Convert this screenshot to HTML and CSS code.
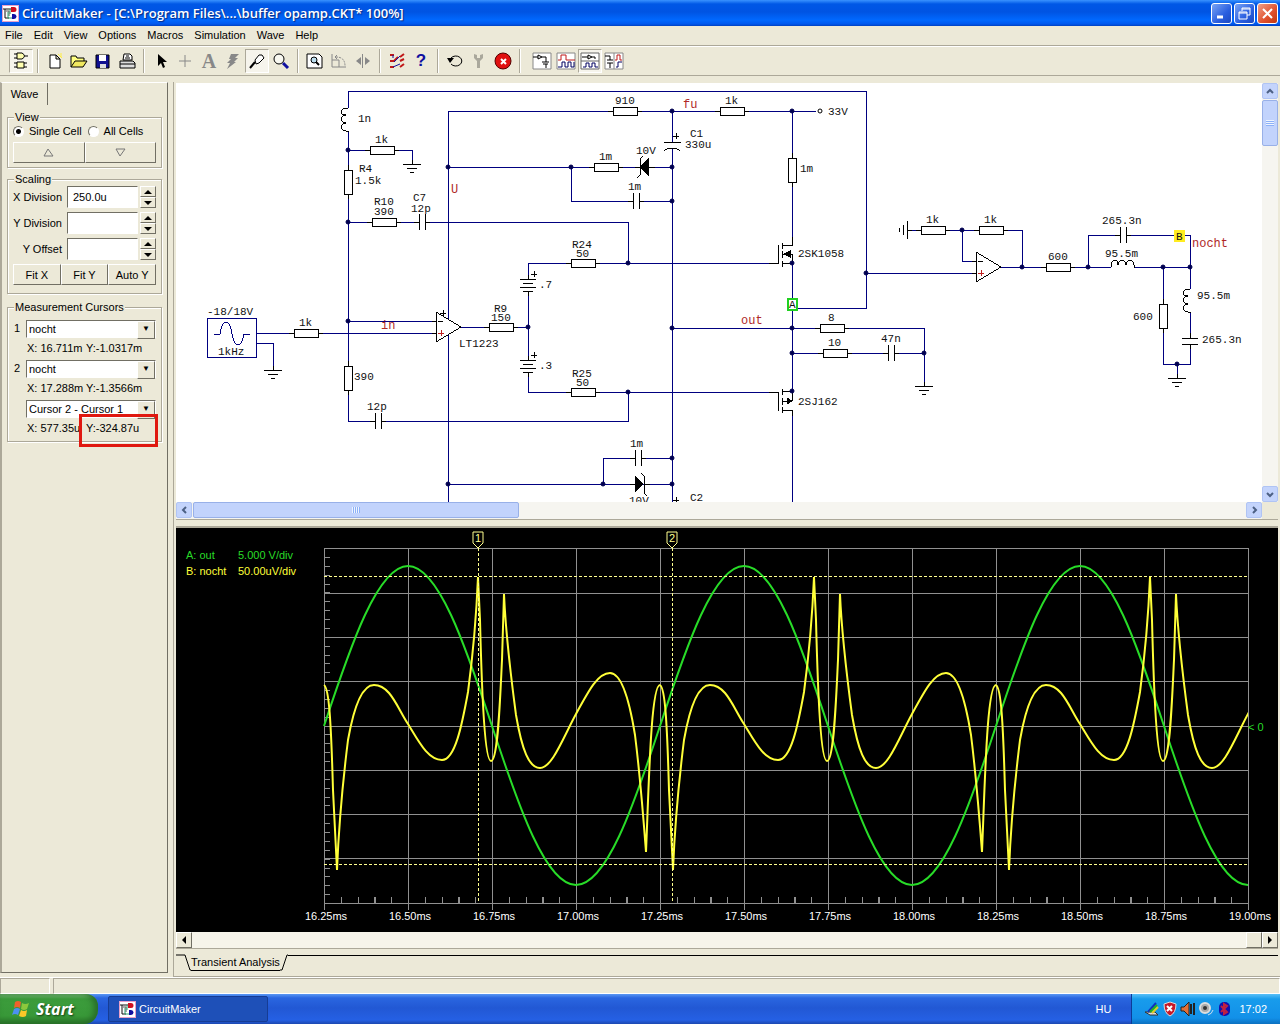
FILE: index.html
```html
<!DOCTYPE html>
<html lang="en">
<head>
  <meta charset="UTF-8">
  <title>CircuitMaker - buffer opamp.CKT</title>
  <meta name="viewport" content="width=device-width, initial-scale=1.0">
  <link rel="stylesheet" href="styles.css">
</head>
<body>
  <!-- shared drawings -->
  <svg class="defs" aria-hidden="true">
    <defs>
      <g id="logo">
        <rect width="17" height="17" fill="#e8a0c8"/>
        <rect x="1" y="1" width="15" height="15" fill="#fff"/>
        <path d="M1 4h9M3 4v9h4" fill="none" stroke="#111"/>
        <path d="M4 6h3v5" fill="none" stroke="#555"/>
        <path d="M6 7v6h5M8 4v5" stroke="#30a070" fill="none"/>
        <path d="M9 2h3a2 2 0 0 1 0 5H9z" fill="#d01020"/>
        <path d="M10 9h2a2 2 0 0 1 0 5h-2z" fill="#1010a0"/>
      </g>
      <g id="res-h"><rect x="0" y="-4" width="24" height="8" fill="#fff"/><path d="M-5 0H0M24 0h5"/></g>
      <g id="res-v"><rect x="-4" y="0" width="8" height="24" fill="#fff"/><path d="M0 -5V0M0 24v5"/></g>
      <g id="cap-h"><path d="M-5 0H0M0 -8V8M6 -8V8M6 0h5"/></g>
      <g id="cap-v"><path d="M0 -5V0M-8 0H8M-8 6H8M0 6v5"/></g>
      <g id="coil-v"><path d="M0 0q-7 0 -7 4q0 3 5 3q-5 1 -5 4t5 4q-5 1 -5 4t5 4h2v1"/></g>
      <g id="coil-h"><path d="M0 0q0 -7 4 -7q3 0 3 5q1 -5 4 -5t4 5q1 -5 4 -5t4 5v2h1"/></g>
      <g id="gnd"><path d="M0 -4V0M-9 0H9M-5 4H5M-2 8H2"/></g>
      <g id="battery"><path d="M0 -4V0M-8 0H8M-5 4H5M-8 8H8M-5 12H5M0 12v5M3 -5h6M6 -8v6"/></g>
      <g id="opamp"><path d="M0 -15V15L25 0zM-4 -6H0M-4 6H0M2 -6h5" fill="#fff"/><path class="red" d="M2 6h6M5 3v6"/></g>
      <path id="spin-up" d="M0 4h8L4 0z"/>
      <path id="spin-down" d="M0 0h8L4 4z"/>
    </defs>
  </svg>

  <header class="titlebar">
    <svg width="17" height="17"><use href="#logo"/></svg>
    <h1>CircuitMaker - [C:\Program Files\...\buffer opamp.CKT* 100%]</h1>
    <div class="win-buttons">
      <button type="button" aria-label="Minimize"><svg width="13" height="13"><path d="M2 10h6" stroke="#fff" stroke-width="3"/></svg></button>
      <button type="button" aria-label="Restore"><svg width="13" height="13" fill="none" stroke="#fff"><path d="M4 4V1h8v7H9M4 2h8"/><path d="M1 5h8v7H1zM1 6h8"/></svg></button>
      <button type="button" class="close" aria-label="Close"><svg width="13" height="13"><path d="M2 2l9 9M11 2l-9 9" stroke="#fff" stroke-width="2"/></svg></button>
    </div>
  </header>

  <nav class="menubar">
    <a href="#">File</a>
    <a href="#">Edit</a>
    <a href="#">View</a>
    <a href="#">Options</a>
    <a href="#">Macros</a>
    <a href="#">Simulation</a>
    <a href="#">Wave</a>
    <a href="#">Help</a>
  </nav>

  <div class="toolbar">
    <button type="button" class="on" aria-label="Parts"><svg width="18" height="18" fill="#ffffb0" stroke="#000"><path d="M5 1h5q5 3 0 6H5zM2 2h3M2 6h3M13 4h3M5 10h7v6H5zM2 11h3M2 15h3M12 11h3M12 15h3"/></svg></button>
    <span class="sep"></span>
    <button type="button" aria-label="New"><svg width="18" height="18"><path d="M12 2l4 4M15 1v4" stroke="#ffee40"/><path d="M4 3h6l4 4v9H4zM10 3v4h4" fill="#fff" stroke="#000"/></svg></button>
    <button type="button" aria-label="Open"><svg width="18" height="18"><path d="M1 15V4h5l1 2h7v3" fill="#ffff80" stroke="#000"/><path d="M1 15l4-6h12l-4 6z" fill="#f0e860" stroke="#000"/></svg></button>
    <button type="button" aria-label="Save"><svg width="18" height="18"><path d="M2 3h13v13H2z" fill="#101090" stroke="#000"/><path d="M5 3h7v6H5z" fill="#fff"/><path d="M6 12h6v4H6z" fill="#ddd"/></svg></button>
    <button type="button" aria-label="Print"><svg width="18" height="18" stroke="#000"><path d="M5 8l1-6h6l2 2v4z" fill="#fff"/><path d="M8 4h3M7 6h5"/><path d="M2 9h13l2 2v5H2zM2 12h15" fill="#ddd"/></svg></button>
    <span class="sep"></span>
    <button type="button" aria-label="Select"><svg width="18" height="18"><path d="M6 2v12l3-3 2 5 2-1-2-5h4z"/></svg></button>
    <button type="button" aria-label="Wire"><svg width="18" height="18"><path d="M3 9h12M9 3v12" stroke="#888"/></svg></button>
    <button type="button" class="letter" aria-label="Text">A</button>
    <button type="button" aria-label="Delete"><svg width="18" height="18"><path d="M7 2h8l-4 4h3l-4 4h2L3 17l3-6H3l4-4H5z" fill="#888"/></svg></button>
    <button type="button" class="on" aria-label="Probe"><svg width="18" height="18"><path d="M2 16l5-6" stroke="#000" stroke-width="2"/><path d="M7 8l4-5h3l2 3-5 5-3 1z" fill="#fff" stroke="#000"/></svg></button>
    <button type="button" aria-label="Zoom"><svg width="18" height="18"><circle cx="7" cy="7" r="5" fill="#f8f8f0" stroke="#000"/><path d="M11 11l5 5" stroke="#1010a0" stroke-width="3"/></svg></button>
    <span class="sep"></span>
    <button type="button" aria-label="Fit"><svg width="18" height="18"><path d="M1 2h12l3 3v11H1z" fill="#fff" stroke="#000"/><circle cx="8" cy="8" r="3" fill="#bde" stroke="#000"/><path d="M10 10l3 3" stroke="#000" stroke-width="2"/></svg></button>
    <button type="button" aria-label="Rotate"><svg width="18" height="18" fill="none" stroke="#888"><path d="M2 2v13h14M2 8h7v7M7 3l-2 2 2 2"/><path d="M6 5q9 0 9 9" stroke-dasharray="2 1"/></svg></button>
    <button type="button" aria-label="Mirror"><svg width="18" height="18" fill="#888"><path d="M7 5v8L2 9zM11 5v8l5-4zM8 2h1v14H8z"/></svg></button>
    <span class="sep"></span>
    <button type="button" aria-label="Digital"><svg width="18" height="18" fill="none"><path d="M2 3h4M2 9h4l4-4M2 15h4M12 5l4-3M12 9l4-2M12 15l4-3" stroke="#c01818" stroke-width="2"/><path d="M5 3v3M5 15l7-3M6 10l6-6" stroke="#1010a0"/></svg></button>
    <button type="button" class="help" aria-label="Help">?</button>
    <span class="sep"></span>
    <button type="button" aria-label="Reset"><svg width="18" height="18"><path d="M5 6a6 5 0 1 1 0 6" fill="none" stroke="#000"/><path d="M1 6h7l-4 5z"/></svg></button>
    <button type="button" aria-label="Step"><svg width="18" height="18"><path d="M4 2v4l3 3v7h3V9l3-3V2l-3 1v3H7V3z" fill="#aaa89c"/></svg></button>
    <button type="button" aria-label="Stop"><svg width="18" height="18"><circle cx="9" cy="9" r="8" fill="#e01010" stroke="#500"/><path d="M7 7l5 5M12 7l-5 5" stroke="#fff" stroke-width="2"/></svg></button>
    <span class="sep wide"></span>
    <button type="button" aria-label="Schematic view"><svg width="20" height="18" fill="none" stroke="#000"><path d="M1 1h18v16H1z" fill="#fff" stroke="#888"/><path d="M1 5h5M6 3v4l4-2zM10 5h4v5M10 10h7M11 12h5M14 12v4"/></svg></button>
    <button type="button" aria-label="Wave view"><svg width="20" height="18" fill="none"><path d="M1 1h18v16H1z" fill="#fff" stroke="#888"/><path d="M2 8h3V3h5v5h9" stroke="#c01818"/><path d="M2 15h4v-5h3v5h3v-5h3v5h3v-5" stroke="#000060"/></svg></button>
    <button type="button" class="on" aria-label="Split horizontal"><svg width="20" height="18" fill="none" stroke="#000"><path d="M1 1h18v16H1zM1 9h18" fill="#fff" stroke="#666"/><path d="M2 5h6M8 3v4l4-2zM12 5h3v2"/><path d="M3 15h3v-4h3v4h3v-4h3v4h3" stroke="#000060"/></svg></button>
    <button type="button" aria-label="Split vertical"><svg width="20" height="18" fill="none"><path d="M1 1h18v16H1zM10 1v16" fill="#fff" stroke="#888"/><path d="M1 4h5v4M3 8h6M3 11h6M6 11v5" stroke="#000"/><path d="M11 8h2V3h3v5h2" stroke="#c01818"/><path d="M12 15h2v-5h4" stroke="#000060"/></svg></button>
  </div>

  <main class="work">
    <aside class="side">
      <div class="tabs"><button type="button" class="tab">Wave</button></div>

      <fieldset class="view">
        <legend>View</legend>
        <div class="radios">
          <label><input type="radio" name="cells" checked>Single Cell</label>
          <label><input type="radio" name="cells">All Cells</label>
        </div>
        <div class="button-row">
          <button type="button" aria-label="Previous cell"><svg width="11" height="9" fill="none" stroke="#777"><path d="M1 8h9L5 1z"/></svg></button>
          <button type="button" aria-label="Next cell"><svg width="11" height="9" fill="none" stroke="#777"><path d="M1 1h9L5 8z"/></svg></button>
        </div>
      </fieldset>

      <fieldset class="scaling">
        <legend>Scaling</legend>
        <div class="field">
          <label for="xdiv">X Division</label>
          <input type="text" id="xdiv" value="250.0u">
          <div class="spin">
            <button type="button" aria-label="X up"><svg width="8" height="4"><use href="#spin-up"/></svg></button>
            <button type="button" aria-label="X down"><svg width="8" height="4"><use href="#spin-down"/></svg></button>
          </div>
        </div>
        <div class="field">
          <label for="ydiv">Y Division</label>
          <input type="text" id="ydiv">
          <div class="spin">
            <button type="button" aria-label="Y up"><svg width="8" height="4"><use href="#spin-up"/></svg></button>
            <button type="button" aria-label="Y down"><svg width="8" height="4"><use href="#spin-down"/></svg></button>
          </div>
        </div>
        <div class="field">
          <label for="yoff">Y Offset</label>
          <input type="text" id="yoff">
          <div class="spin">
            <button type="button" aria-label="Offset up"><svg width="8" height="4"><use href="#spin-up"/></svg></button>
            <button type="button" aria-label="Offset down"><svg width="8" height="4"><use href="#spin-down"/></svg></button>
          </div>
        </div>
        <div class="button-row">
          <button type="button">Fit X</button>
          <button type="button">Fit Y</button>
          <button type="button">Auto Y</button>
        </div>
      </fieldset>

      <fieldset class="cursors">
        <legend>Measurement Cursors</legend>
        <div class="cursor">
          <label for="cur1">1</label>
          <div class="combo"><select id="cur1"><option>nocht</option><option>out</option></select></div>
        </div>
        <p class="readout"><span>X: 16.711m</span><span>Y:-1.0317m</span></p>
        <div class="cursor">
          <label for="cur2">2</label>
          <div class="combo"><select id="cur2"><option>nocht</option><option>out</option></select></div>
        </div>
        <p class="readout"><span>X: 17.288m</span><span>Y:-1.3566m</span></p>
        <div class="cursor">
          <div class="combo"><select aria-label="Difference"><option>Cursor 2 - Cursor 1</option></select></div>
        </div>
        <p class="readout"><span>X: 577.35u</span><span>Y:-324.87u</span></p>
        <div class="highlight"></div>
      </fieldset>
    </aside>

    <section class="panes">
      <div class="schematic">
        <div class="canvas">
          <svg class="circuit" viewBox="176 83 1086 419" preserveAspectRatio="xMinYMin slice">
            <!-- wires -->
            <g class="wire">
              <path d="M348 108V91H866V308H792M348 132V421H375M348 150H370M395 150H412V164"/>
              <path d="M448 319V111H613M637 111H816M448 335V502M448 167H640M649 167H672M571 167V201H633M639 201H672"/>
              <path d="M348 222H419M425 222H628V263M528 280V263H778M528 291V360M528 372V392H778M381 421H628V392"/>
              <path d="M672 111V142M672 149V502M792 111V245M792 263V391M792 410V502"/>
              <path d="M348 321H436M257 333H436M257 343H273V370M461 327H528"/>
              <path d="M672 328H924V386M792 353H888M894 353H924M448 484H672M603 484V458H635M641 458H672"/>
              <path d="M866 273H976M907 230H1022V267M962 230V261H976M1001 267H1111M1135 267H1190"/>
              <path d="M1088 267V235H1120M1126 235H1190V289M1163 267V364H1190V344M1190 313V338M1177 364V378"/>
              <rect x="207" y="318" width="49" height="39"/>
              <path d="M214 334h6q2 -12 6 -12t6 12q2 11 6 11t6 -11h6"/>
            </g>
            <!-- parts -->
            <g class="part">
              <use href="#coil-v" x="348" y="108"/>
              <use href="#coil-v" x="1190" y="289"/>
              <use href="#coil-h" x="1111" y="267"/>
              <use href="#res-h" x="370" y="150"/>
              <use href="#res-h" x="613" y="111"/>
              <use href="#res-h" x="720" y="111"/>
              <use href="#res-h" x="594" y="167"/>
              <use href="#res-h" x="372" y="222"/>
              <use href="#res-h" x="571" y="263"/>
              <use href="#res-h" x="571" y="392"/>
              <use href="#res-h" x="489" y="327"/>
              <use href="#res-h" x="294" y="333"/>
              <use href="#res-h" x="820" y="328"/>
              <use href="#res-h" x="823" y="353"/>
              <use href="#res-h" x="921" y="230"/>
              <use href="#res-h" x="979" y="230"/>
              <use href="#res-h" x="1046" y="267"/>
              <use href="#res-v" x="348" y="170"/>
              <use href="#res-v" x="348" y="366"/>
              <use href="#res-v" x="792" y="158"/>
              <use href="#res-v" x="1163" y="304"/>
              <use href="#cap-h" x="419" y="222"/>
              <use href="#cap-h" x="375" y="421"/>
              <use href="#cap-h" x="633" y="201"/>
              <use href="#cap-h" x="635" y="458"/>
              <use href="#cap-h" x="888" y="353"/>
              <use href="#cap-h" x="1120" y="235"/>
              <use href="#cap-v" x="1190" y="338"/>
              <use href="#gnd" x="412" y="164"/>
              <use href="#gnd" x="273" y="370"/>
              <use href="#gnd" x="924" y="386"/>
              <use href="#gnd" x="1177" y="378"/>
              <path d="M912 230h-5M907 221v18M903 225v10M899 228v4"/>
              <use href="#battery" x="528" y="279"/>
              <use href="#battery" x="528" y="360"/>
              <use href="#opamp" x="436" y="327"/>
              <use href="#opamp" x="976" y="267"/>
              <path d="M440 313h6M443 310v6"/>
              <!-- electrolytic C1 and the top of C2 -->
              <path d="M664 142h17M664 151q3 -3 8 -3t8 3M673 136h6M676 133v6M673 500h6M676 497v5"/>
              <circle class="pin" cx="820" cy="111" r="2"/>
              <!-- zeners -->
              <path d="M635 167h5M649 167h6M643 156l-3 3v16l-3 3"/>
              <path class="solid" d="M640 167l8 -8v16z"/>
              <path d="M630 484h5M644 484h6M641 473l3 3v17l3 3"/>
              <path class="solid" d="M643 484l-8 -8v16z"/>
              <!-- mosfets -->
              <path d="M769 263h9v-18M782 243v6M782 251v7M782 261v6M782 245h10v-8M782 254h10v9M782 263h10"/>
              <path class="solid" d="M784 254l6 -3v6z"/>
              <path d="M769 392h9v19M782 389v6M782 398v7M782 407v6M782 391h10v10M782 401h10M782 410h10v6"/>
              <path class="solid" d="M792 401l-5 -3v6z"/>
            </g>
            <g class="node">
              <circle cx="348" cy="150" r="2"/><circle cx="348" cy="222" r="2"/><circle cx="348" cy="321" r="2"/>
              <circle cx="448" cy="167" r="2"/><circle cx="448" cy="484" r="2"/><circle cx="571" cy="167" r="2"/>
              <circle cx="672" cy="111" r="2"/><circle cx="672" cy="167" r="2"/><circle cx="672" cy="201" r="2"/>
              <circle cx="672" cy="328" r="2"/><circle cx="672" cy="458" r="2"/><circle cx="672" cy="484" r="2"/>
              <circle cx="628" cy="263" r="2"/><circle cx="628" cy="392" r="2"/><circle cx="528" cy="327" r="2"/>
              <circle cx="603" cy="484" r="2"/><circle cx="792" cy="111" r="2"/><circle cx="792" cy="263" r="2"/>
              <circle cx="792" cy="328" r="2"/><circle cx="792" cy="353" r="2"/><circle cx="792" cy="391" r="2"/>
              <circle cx="924" cy="353" r="2"/><circle cx="866" cy="273" r="2"/><circle cx="962" cy="230" r="2"/>
              <circle cx="1022" cy="267" r="2"/><circle cx="1088" cy="267" r="2"/><circle cx="1163" cy="267" r="2"/>
              <circle cx="1190" cy="267" r="2"/><circle cx="1177" cy="364" r="2"/>
            </g>
            <!-- probes -->
            <rect class="probe-a" x="788" y="299" width="9" height="11"/>
            <rect class="probe-b" x="1174" y="230" width="11" height="12"/>
            <!-- labels -->
            <g class="label">
              <text x="358" y="122">1n</text>
              <text x="375" y="143">1k</text>
              <text x="359" y="172">R4</text>
              <text x="355" y="184">1.5k</text>
              <text x="374" y="205">R10</text>
              <text x="374" y="215">390</text>
              <text x="413" y="201">C7</text>
              <text x="411" y="212">12p</text>
              <text x="615" y="104">910</text>
              <text x="725" y="104">1k</text>
              <text x="828" y="115">33V</text>
              <text x="690" y="137">C1</text>
              <text x="685" y="148">330u</text>
              <text x="636" y="154">10V</text>
              <text x="599" y="160">1m</text>
              <text x="628" y="190">1m</text>
              <text x="800" y="172">1m</text>
              <text x="572" y="248">R24</text>
              <text x="576" y="257">50</text>
              <text x="539" y="288">.7</text>
              <text x="798" y="257">2SK1058</text>
              <text x="207" y="315">-18/18V</text>
              <text x="218" y="355">1kHz</text>
              <text x="299" y="326">1k</text>
              <text x="354" y="380">390</text>
              <text x="367" y="410">12p</text>
              <text x="459" y="347">LT1223</text>
              <text x="494" y="312">R9</text>
              <text x="491" y="321">150</text>
              <text x="539" y="369">.3</text>
              <text x="572" y="377">R25</text>
              <text x="576" y="386">50</text>
              <text x="630" y="447">1m</text>
              <text x="629" y="504">10V</text>
              <text x="690" y="501">C2</text>
              <text x="828" y="321">8</text>
              <text x="828" y="346">10</text>
              <text x="881" y="342">47n</text>
              <text x="798" y="405">2SJ162</text>
              <text x="926" y="223">1k</text>
              <text x="984" y="223">1k</text>
              <text x="1048" y="260">600</text>
              <text x="1102" y="224">265.3n</text>
              <text x="1105" y="257">95.5m</text>
              <text x="1197" y="299">95.5m</text>
              <text x="1133" y="320">600</text>
              <text x="1202" y="343">265.3n</text>
              <text x="789" y="308">A</text>
              <text x="1176" y="240">B</text>
            </g>
            <g class="net">
              <text x="451" y="193">U</text>
              <text x="683" y="108">fu</text>
              <text x="381" y="329">in</text>
              <text x="741" y="324">out</text>
              <text x="1192" y="247">nocht</text>
            </g>
          </svg>
        </div>
        <div class="xp-scroll vertical">
          <button type="button" aria-label="Scroll up"><svg width="9" height="9"><path d="M1 6l3-3 3 3"/></svg></button>
          <div class="thumb"><i></i></div>
          <button type="button" aria-label="Scroll down"><svg width="9" height="9"><path d="M1 3l3 3 3-3"/></svg></button>
        </div>
        <div class="xp-scroll horizontal">
          <button type="button" aria-label="Scroll left"><svg width="9" height="9"><path d="M6 1L3 4l3 3"/></svg></button>
          <div class="thumb"><i></i></div>
          <button type="button" aria-label="Scroll right"><svg width="9" height="9"><path d="M3 1l3 3-3 3"/></svg></button>
        </div>
      </div>

      <div class="splitter"></div>

      <div class="waves">
        <svg viewBox="176 528 1102 404" preserveAspectRatio="xMinYMin meet">
          <defs>
            <path id="nocht" d="M324 685C329 688 331 720 333 790L337 870C339 820 343 780 348 740C354 706 362 685 374 685C390 685 397 707 408 724C419 742 428 760 442 760C455 760 462 725 468 692C472 662 476 625 478 577L480 620C482 700 485 761 491 761C498 761 500 700 502 660L504 594C506 640 512 685 516 715C522 750 529 768 540 768C552 768 563 738 576 714C589 690 598 673 610 673C622 673 630 704 635 735C640 775 643 812 646 852C649 780 651 685 660 685"/>
          </defs>
          <g class="grid">
            <path d="M324 548V903H1248V548zM324 593H1248M324 637H1248M324 681H1248M324 726H1248M324 770H1248M324 814H1248M324 858H1248"/>
            <path d="M408 548V910M492 548V910M576 548V910M660 548V910M744 548V910M828 548V910M912 548V910M996 548V910M1080 548V910M1164 548V910M324 903v7M1248 903v7"/>
            <line class="ticks-y" x1="327" y1="548" x2="327" y2="903" pathLength="320"/>
            <line class="ticks-x" x1="324" y1="900" x2="1248" y2="900" pathLength="825"/>
          </g>
          <path class="trace-a" d="M324 726c27-82 54-160 84-160s57 78 84 160s54 159 84 159s57-77 84-159s54-160 84-160s57 78 84 160s54 159 84 159s57-77 84-159s54-160 84-160s57 78 84 160s54 159 84 159"/>
          <g class="trace-b">
            <use href="#nocht"/>
            <use href="#nocht" x="336"/>
            <svg x="996" y="528" width="252" height="404" viewBox="996 528 252 404"><use href="#nocht" x="672"/></svg>
          </g>
          <g class="cursor-line">
            <path d="M324 576H1248M324 864H1248M478 548V903M672 548V903"/>
          </g>
          <g class="marker">
            <path d="M473 532h10v11l-5 5l-5 -5zM667 532h10v11l-5 5l-5 -5z"/>
            <text x="478" y="542">1</text>
            <text x="672" y="542">2</text>
          </g>
          <g class="key-a">
            <text x="186" y="559">A: out</text><text x="238" y="559">5.000 V/div</text>
            <text x="1248" y="731">&lt; 0</text>
          </g>
          <g class="key-b">
            <text x="186" y="575">B: nocht</text><text x="238" y="575">50.00uV/div</text>
          </g>
          <g class="axis">
            <text x="326" y="920">16.25ms</text>
            <text x="410" y="920">16.50ms</text>
            <text x="494" y="920">16.75ms</text>
            <text x="578" y="920">17.00ms</text>
            <text x="662" y="920">17.25ms</text>
            <text x="746" y="920">17.50ms</text>
            <text x="830" y="920">17.75ms</text>
            <text x="914" y="920">18.00ms</text>
            <text x="998" y="920">18.25ms</text>
            <text x="1082" y="920">18.50ms</text>
            <text x="1166" y="920">18.75ms</text>
            <text x="1250" y="920">19.00ms</text>
          </g>
        </svg>
      </div>

      <div class="win-scroll">
        <button type="button" aria-label="Earlier"><svg width="5" height="8"><path d="M4 0v8L0 4z"/></svg></button>
        <div class="thumb"></div>
        <button type="button" aria-label="Later"><svg width="5" height="8"><path d="M0 0v8l4-4z"/></svg></button>
      </div>

      <div class="sheet-tabs">
        <svg width="15" height="17"><path d="M0 1h9l5 15h1"/></svg>
        <button type="button">Transient Analysis</button>
        <svg width="8" height="17"><path d="M0 16h2l5-15h1"/></svg>
        <span class="rule"></span>
      </div>
    </section>
  </main>

  <div class="statusbar"><span></span><span></span></div>

  <footer class="taskbar">
    <button type="button" class="start">
      <svg width="20" height="18"><path d="M4 2q3-2 6 0l-1 6q-3-2-6 0z" fill="#f0602c"/><path d="M11 3q3 2 7 0l-2 6q-3 2-6 0z" fill="#8cc83c"/><path d="M3 9q3-2 6 0l-2 6q-3-2-6 0z" fill="#4c90f0"/><path d="M10 10q3 2 6 0l-1 6q-3 2-7 0z" fill="#fcc828"/></svg>
      Start
    </button>
    <button type="button" class="task"><svg width="17" height="17"><use href="#logo"/></svg>CircuitMaker</button>
    <span class="lang">HU</span>
    <div class="tray">
      <svg width="16" height="16"><path d="M1 11l5 3h8l-3-3z" fill="#ddd" stroke="#333"/><path d="M4 11l8-9" stroke="#1030c0" stroke-width="2"/><path d="M6 11l7-7" stroke="#20b020" stroke-width="2"/><path d="M8 12l6-6" stroke="#e0d020" stroke-width="2"/></svg>
      <svg width="16" height="16"><path d="M8 1l6 2q0 9-6 12Q2 12 2 3z" fill="#c81828" stroke="#ddd"/><path d="M5 5l5 5M10 5l-5 5" stroke="#fff" stroke-width="2"/></svg>
      <svg width="16" height="16"><path d="M1 6h3l5-5v14l-5-5H1z" fill="#e07038" stroke="#222"/><path d="M11 3v10M14 2v12" stroke="#222" stroke-width="2"/></svg>
      <svg width="16" height="16"><circle cx="7" cy="7" r="5" fill="#aaa" stroke="#ddd" stroke-width="2"/><circle cx="7" cy="7" r="2" fill="#333"/><path d="M10 14q4-1 5-5" stroke="#cde" fill="none"/></svg>
      <svg width="16" height="16"><rect x="3" y="1" width="11" height="14" rx="5" fill="#1010b0"/><path d="M5 5l6 6-3 2V3l3 2-6 6" stroke="#c02040" stroke-width="2" fill="none"/></svg>
      <time>17:02</time>
    </div>
  </footer>
</body>
</html>
```
FILE: styles.css
```css
* {
  box-sizing: border-box;
}
body {
  margin: 0;
  height: 100vh;
  display: flex;
  flex-direction: column;
  overflow: hidden;
  background: #ece9d8;
  color: #000;
  font-family: "Liberation Sans", Arial, sans-serif;
  font-size: 11px;
}
button, input, select {
  font: inherit;
  color: inherit;
  margin: 0;
  padding: 0;
  border-radius: 0;
}
button {
  display: flex;
  align-items: center;
  justify-content: center;
  border: none;
  background: none;
}
svg {
  display: block;
  flex: none;
}
.defs {
  position: absolute;
  width: 0;
  height: 0;
}

/* title bar */
.titlebar {
  display: flex;
  align-items: center;
  height: 26px;
  padding: 0 2px;
  gap: 3px;
  background: linear-gradient(#3a93ff 0, #0058e6 4px, #0054e3 12px, #0068ff 20px, #0058ee 24px, #0040c0 26px);
}
.titlebar h1 {
  flex: 1;
  margin: 0;
  color: #fff;
  font: 600 13px/24px "Open Sans", sans-serif;
  text-shadow: 1px 1px 1px #0a2a80;
  white-space: nowrap;
}
.win-buttons {
  display: flex;
  gap: 2px;
}
.win-buttons button {
  width: 21px;
  height: 21px;
  border: 1px solid #fff;
  border-radius: 3px;
  background: linear-gradient(135deg, #7aa4f4, #2a5fe0 60%, #1c48c0);
}
.win-buttons .close {
  background: linear-gradient(135deg, #f0a088, #e0502c 60%, #c03810);
}

/* menu */
.menubar {
  display: flex;
  height: 20px;
  padding-left: 5px;
  gap: 11px;
  line-height: 18px;
  border-bottom: 1px solid #aca899;
}
.menubar a {
  color: #000;
  text-decoration: none;
}

/* toolbar */
.toolbar {
  display: flex;
  align-items: center;
  height: 30px;
  padding-left: 9px;
  border-top: 1px solid #fff;
  border-bottom: 1px solid #aca899;
}
.toolbar button {
  width: 24px;
  height: 24px;
}
.toolbar .on {
  background: #f6f4ec;
  border: 1px solid #fff;
  border-top-color: #aca899;
  border-left-color: #aca899;
}
.toolbar .sep {
  width: 2px;
  height: 24px;
  margin: 0 4px;
  border-left: 1px solid #aca899;
  border-right: 1px solid #fff;
}
.toolbar .wide {
  margin-right: 9px;
}
.toolbar .letter {
  font: bold 20px "Liberation Serif", serif;
  color: #888;
}
.toolbar .help {
  font: bold 17px "Liberation Sans", sans-serif;
  color: #1010a0;
}

/* work area */
.work {
  flex: 1;
  display: flex;
  min-height: 0;
  padding-top: 6px;
}
.side {
  width: 168px;
  margin: 0 5px 4px 0;
  padding: 0 5px;
  border-left: 2px solid #aca899;
  border-right: 1px solid #716f64;
  border-bottom: 1px solid #716f64;
  border-top: 1px solid #fff;
}
.tabs {
  height: 22px;
  margin: 0 -5px 5px;
}
.tab {
  width: 46px;
  height: 22px;
  border-right: 1px solid #716f64;
}
fieldset {
  position: relative;
  min-width: 0;
  margin: 0 0 4px;
  padding: 0 5px;
  border: 1px solid #aca899;
  box-shadow: inset 1px 1px #fff, 1px 1px #fff;
}
legend {
  height: 14px;
  line-height: 14px;
  margin-left: 1px;
  padding: 0 1px;
  background: #ece9d8;
}
.view {
  height: 58px;
}
.scaling {
  height: 122px;
  margin-bottom: 6px;
}
.cursors {
  height: 142px;
  padding-top: 6px;
}
.radios {
  display: flex;
  gap: 6px;
  height: 18px;
}
.radios label {
  display: flex;
  align-items: center;
  height: 14px;
  gap: 5px;
  white-space: nowrap;
}
.radios input {
  appearance: none;
  width: 11px;
  height: 11px;
  border: 1px solid;
  border-color: #716f64 #fff #fff #716f64;
  border-radius: 50%;
  background: #fff;
}
.radios input:checked {
  background: radial-gradient(circle, #000 0 2px, #fff 3px);
}
.button-row {
  display: flex;
}
.button-row button,
.spin button,
.combo::after,
.win-scroll button,
.win-scroll .thumb {
  background: #ece9d8;
  border: 1px solid;
  border-color: #fff #716f64 #716f64 #fff;
}
.button-row button {
  flex: 1;
  height: 21px;
}
.field {
  display: flex;
  align-items: center;
  height: 22px;
  margin-bottom: 4px;
}
.field label {
  width: 50px;
  text-align: right;
  white-space: nowrap;
}
.field input {
  width: 71px;
  height: 22px;
  margin: 0 2px 0 5px;
  padding: 0 5px;
}
.field input,
.combo select {
  border: 1px solid;
  border-color: #716f64 #fff #fff #716f64;
  background: #fff;
}
.spin {
  width: 16px;
}
.spin button {
  width: 16px;
  height: 11px;
}
.cursor {
  position: relative;
  display: flex;
  justify-content: flex-end;
  height: 18px;
}
.cursor label {
  flex: 1;
  padding-left: 1px;
  line-height: 16px;
}
.combo {
  position: relative;
  width: 130px;
}
.combo select {
  appearance: none;
  width: 100%;
  height: 18px;
  padding: 0 2px;
}
/* drop-down arrow */
.combo::after {
  content: "▼";
  position: absolute;
  top: 1px;
  right: 1px;
  width: 16px;
  height: 16px;
  font-size: 8px;
  line-height: 14px;
  text-align: center;
  pointer-events: none;
}
.readout {
  display: flex;
  gap: 4px;
  margin: 0 0 0 14px;
  height: 22px;
  line-height: 20px;
  white-space: nowrap;
}
.readout span:first-child {
  width: 55px;
}
.highlight {
  position: absolute;
  right: 3px;
  bottom: -6px;
  width: 79px;
  height: 33px;
  border: 3px solid #e01810;
}

.panes {
  flex: 1;
  min-width: 0;
  display: flex;
  flex-direction: column;
  padding: 1px 2px 4px;
  border-left: 1px solid #aca899;
  border-bottom: 1px solid #aca899;
}
.schematic {
  flex: 1;
  min-height: 0;
  display: grid;
  grid-template: minmax(0, 1fr) 17px / minmax(0, 1fr) 16px;
}
.canvas {
  background: #fff;
  overflow: hidden;
}
.circuit {
  width: 100%;
  height: 100%;
}
.wire, .part {
  fill: none;
  stroke: #000080;
  shape-rendering: crispEdges;
}
.part {
  stroke: #000;
}
.part .solid {
  fill: #000;
}
.part .pin {
  fill: #fff;
  shape-rendering: auto;
}
.red {
  stroke: #c02020;
}
.node {
  fill: #000050;
  stroke: #000050;
}
.probe-a {
  fill: #fff;
  stroke: #20d020;
  stroke-width: 2;
}
.probe-b {
  fill: #ffec20;
}
.label, .net {
  font-family: "Liberation Mono", monospace;
  font-size: 11px;
  fill: #111;
}
.net {
  font-size: 12px;
  fill: #b02828;
}

/* Luna scroll bars */
.xp-scroll {
  display: flex;
  justify-content: space-between;
  background: #f6f5f0;
}
.vertical {
  flex-direction: column;
}
.xp-scroll button {
  width: 16px;
  height: 16px;
  border: 1px solid #b0c4f4;
  border-radius: 2px;
  background: #c4d4fc;
}
.xp-scroll button svg {
  fill: none;
  stroke: #4d6185;
  stroke-width: 2;
}
.xp-scroll .thumb {
  display: flex;
  align-items: center;
  justify-content: center;
  border: 1px solid #98b0e8;
  border-radius: 2px;
  background: #c2d3fc;
}
.horizontal .thumb {
  width: 30%;
  height: 16px;
  margin: 0 auto 0 1px;
}
.vertical .thumb {
  width: 16px;
  height: 46px;
  margin: 1px 0 auto;
}
.thumb i {
  width: 8px;
  height: 6px;
  background: repeating-linear-gradient(90deg, #eef4fe 0 1px, #8cb0f8 1px 2px);
}
.vertical .thumb i {
  background: repeating-linear-gradient(#eef4fe 0 1px, #8cb0f8 1px 2px);
}

.splitter {
  height: 9px;
  border-top: 1px solid #aca899;
  border-bottom: 2px solid #aca899;
}

/* oscilloscope */
.waves {
  background: #000;
}
.waves > svg {
  width: 100%;
  height: auto;
}
.waves text {
  font-size: 11px;
}
.grid {
  fill: none;
  stroke: #909090;
  shape-rendering: crispEdges;
}
.ticks-y {
  stroke-width: 6;
  stroke-dasharray: 1 7;
}
.ticks-x {
  stroke-width: 7;
  stroke-dasharray: 1 14;
}
.trace-a, .trace-b {
  fill: none;
  stroke: #28dc28;
  stroke-width: 2;
}
.trace-b {
  stroke: #ffff38;
}
.cursor-line {
  fill: none;
  stroke: #ffff90;
  stroke-dasharray: 3 2;
  shape-rendering: crispEdges;
}
.marker path {
  fill: none;
  stroke: #ffff90;
}
.marker text {
  fill: #ffff90;
  text-anchor: middle;
}
.key-a {
  fill: #28dc28;
}
.key-b {
  fill: #ffff38;
}
.axis {
  fill: #fff;
  text-anchor: middle;
}

.win-scroll {
  display: flex;
  height: 17px;
  background: #f6f4ea;
  border-bottom: 1px solid #aca899;
}
.win-scroll button,
.win-scroll .thumb {
  width: 16px;
  height: 16px;
}
.win-scroll .thumb {
  margin-left: auto;
}
.sheet-tabs {
  display: flex;
  height: 18px;
  margin-top: 5px;
}
.sheet-tabs svg {
  fill: none;
  stroke: #000;
}
.sheet-tabs button {
  height: 17px;
  border-bottom: 1px solid #000;
}
.sheet-tabs .rule {
  flex: 1;
  height: 2px;
  border-bottom: 1px solid #000;
}

/* status bar */
.statusbar {
  display: flex;
  gap: 3px;
  height: 17px;
  border-top: 1px solid #fff;
}
.statusbar span {
  width: 50px;
  border: 1px solid;
  border-color: #aca899 #fff #fff #aca899;
}
.statusbar span:last-child {
  flex: 1;
}

/* taskbar */
.taskbar {
  display: flex;
  align-items: center;
  height: 30px;
  color: #fff;
  background: linear-gradient(#5a98f4 0, #2a66e0 4px, #2258d4 14px, #2560e4 26px, #1c48b0 30px);
}
.start {
  width: 98px;
  height: 30px;
  gap: 5px;
  padding-right: 13px;
  color: #fff;
  border-radius: 0 12px 14px 0;
  background: linear-gradient(#80c080 0, #3c9c3c 5px, #389838 22px, #287428 30px);
  box-shadow: inset -4px 0 6px #286c28;
  font: italic bold 16px "Open Sans", sans-serif;
  text-shadow: 1px 1px 2px #123c12;
}
.task {
  justify-content: flex-start;
  width: 160px;
  height: 26px;
  margin-left: 10px;
  padding-left: 10px;
  gap: 3px;
  color: #fff;
  border: 1px solid #163c94;
  border-radius: 2px;
  background: #1e50b8;
}
.lang {
  margin-left: auto;
  margin-right: 20px;
}
.tray {
  display: flex;
  align-items: center;
  gap: 2px;
  height: 30px;
  padding: 0 13px 0 12px;
  border-left: 1px solid #0c3c98;
  background: linear-gradient(#58c0f8 0, #189cec 5px, #1290e8 24px, #0c70c0 30px);
}
.tray time {
  margin-left: 5px;
}
```
